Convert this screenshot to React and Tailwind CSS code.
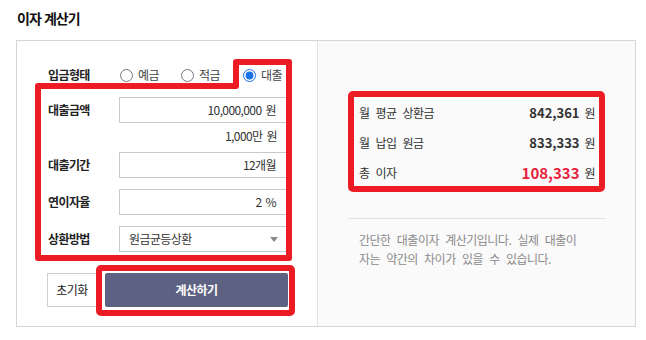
import React from 'react';

const FONT = { fontFamily: '"Noto Sans CJK KR", "Noto Sans", sans-serif' };

const fields = [
  { id: 'amount', label: '대출금액', value: '10,000,000 원' },
  { id: 'period', label: '대출기간', value: '12개월' },
  { id: 'rate', label: '연이자율', value: '2 %' },
];

const results = [
  { label: '월 평균 상환금', value: '842,361' },
  { label: '월 납입 원금', value: '833,333' },
  { label: '총 이자', value: '108,333', highlight: true },
];

const Radio = ({ label, checked, width }) => (
  <label className="flex items-center gap-[5px] shrink-0" style={{ width }}>
    <input
      type="radio"
      name="kind"
      defaultChecked={checked}
      className="w-[13px] h-[13px] m-0 accent-[#1a73e8]"
    />
    <span className="text-[#444]">{label}</span>
  </label>
);

const FieldBox = ({ children, className = '' }) => (
  <div className={`w-[168px] h-[26px] border border-[#c9c9c9] bg-white flex items-center text-[#333] ${className}`}>
    {children}
  </div>
);

const Row = ({ label, children, className = '' }) => (
  <div className={`flex items-center ${className}`}>
    <div className="w-[71px] font-semibold text-[#222]">{label}</div>
    {children}
  </div>
);

export default function App() {
  return (
    <div
      className="relative w-[646px] h-[340px] bg-white text-[12px] tracking-[-0.6px] [word-spacing:2px] px-[16px] pt-[8px]"
      style={FONT}
    >
      <h1 className="h-[20px] leading-[20px] pl-[1px] text-[14px] font-bold tracking-[-1px] [word-spacing:1px] text-[#111]">
        이자 계산기
      </h1>

      <div className="mt-[12px] w-[620px] h-[287px] border border-[#d6d6d6] flex">
        {/* 입력 영역 */}
        <div className="w-[301px] border-r border-[#e2e2e2] pl-[31px] pt-[21px]">
          <Row label="입금형태" className="h-[26px]">
            <div className="flex items-center pl-[1px]">
              <Radio label="예금" width={61} />
              <Radio label="적금" width={62} />
              <Radio label="대출" checked width={50} />
            </div>
          </Row>

          <Row label={fields[0].label} className="mt-[9px]">
            <FieldBox className="justify-end pr-[10px]">{fields[0].value}</FieldBox>
          </Row>
          <div className="w-[239px] h-[26px] flex items-center justify-end pr-[10px] text-[#333]">
            1,000만 원
          </div>

          <Row label={fields[1].label} className="mt-[3px]">
            <FieldBox className="justify-end pr-[10px]">{fields[1].value}</FieldBox>
          </Row>
          <Row label={fields[2].label} className="mt-[11px]">
            <FieldBox className="justify-end pr-[10px]">{fields[2].value}</FieldBox>
          </Row>
          <Row label="상환방법" className="mt-[11px]">
            <FieldBox className="justify-between pl-[9px] pr-[8px]">
              <span>원금균등상환</span>
              <span className="w-0 h-0 border-l-[4px] border-r-[4px] border-t-[5px] border-l-transparent border-r-transparent border-t-[#8a8a8a]" />
            </FieldBox>
          </Row>

          <div className="mt-[21px] -ml-[1px] flex gap-[8px]">
            <button className="w-[50px] h-[34px] border border-[#cfcfcf] bg-white text-[#222]">
              초기화
            </button>
            <button className="w-[183px] h-[34px] rounded-[2px] bg-[#5d6182] text-white font-bold">
              계산하기
            </button>
          </div>
        </div>

        {/* 결과 영역 */}
        <div className="flex-1 bg-[#fafafa] pl-[30px] pr-[29px]">
          <div className="mt-[57px] px-[11px]">
            {results.map((r) => (
              <div key={r.label} className="h-[30px] flex items-center justify-between">
                <span className="text-[#333] [word-spacing:4px]">{r.label}</span>
                <span className="flex items-center">
                  <span
                    className={
                      r.highlight
                        ? 'text-[15px] font-bold tracking-normal text-[#e8213d]'
                        : 'text-[13px] font-semibold tracking-normal text-[#333]'
                    }
                  >
                    {r.value}
                  </span>
                  <span className="ml-[5px] text-[#333]">원</span>
                </span>
              </div>
            ))}
          </div>
          <div className="mt-[30px] border-t border-[#e3e3e3]" />
          <p className="pt-[11px] px-[11px] leading-[19px] text-[#8a8a8a] tracking-[-0.5px] [word-spacing:4px]">
            간단한 대출이자 계산기입니다. 실제 대출이
            <br />
            자는 약간의 차이가 있을 수 있습니다.
          </p>
        </div>
      </div>

      {/* 빨간 표시 */}
      <svg
        className="absolute inset-0 pointer-events-none"
        width="646"
        height="340"
        viewBox="0 0 646 340"
        fill="none"
        stroke="#ed1c24"
        strokeWidth="6"
        strokeLinejoin="round"
      >
        <path d="M38 86 H236 V62 H289 V258 H38 Z" />
        <rect x="99" y="268" width="193" height="45" rx="2" />
        <rect x="351" y="94" width="251" height="95" rx="2" />
      </svg>
    </div>
  );
}
